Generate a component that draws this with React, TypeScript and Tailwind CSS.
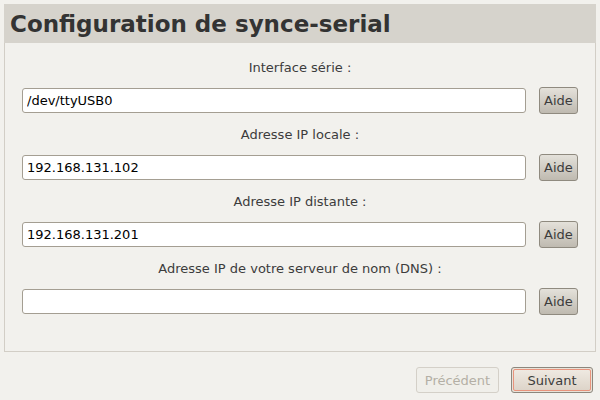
const fields = [
  { label: 'Interface série :', value: '/dev/ttyUSB0' },
  { label: 'Adresse IP locale :', value: '192.168.131.102' },
  { label: 'Adresse IP distante :', value: '192.168.131.201' },
  { label: 'Adresse IP de votre serveur de nom (DNS) :', value: '' },
];

export default function App() {
  return (
    <div
      className="w-[600px] h-[400px] bg-[#f2f1ed] px-[4px] pt-[4px] text-[#3c3c3c] overflow-hidden"
      style={{ fontFamily: '"DejaVu Sans", sans-serif' }}
    >
      {/* Title */}
      <div className="h-[39px] bg-[#d6d3cc] pl-[6px] flex items-center">
        <h1 className="text-[23px] font-bold leading-none text-[#333333] mt-[1px]">
          Configuration de synce-serial
        </h1>
      </div>

      {/* Form panel */}
      <div className="h-[309px] border border-t-0 border-[#d2cec6] px-[17px] pt-[17px] flex flex-col gap-[14px]">
        {fields.map((f) => (
          <div key={f.label} className="flex flex-col gap-[13px]">
            <div className="text-[13px] leading-[15px] text-center">{f.label}</div>
            <div className="h-[25px] flex items-center gap-[13px]">
              <input
                readOnly
                value={f.value}
                className="flex-1 h-[25px] bg-white border border-[#a49e92] rounded-[3px] px-[4px] text-[13px] text-black outline-none"
                style={{ fontFamily: '"DejaVu Sans", sans-serif' }}
              />
              <button className="shrink-0 w-[39px] h-[27px] rounded-[3px] border border-[#8f8a7f] bg-gradient-to-b from-[#e4e1da] to-[#bfbab0] text-[13px] text-[#3c3c3c] leading-none">
                Aide
              </button>
            </div>
          </div>
        ))}
      </div>

      {/* Navigation */}
      <div className="flex justify-end gap-[12px] pt-[15px] pr-[3px]">
        <button className="w-[83px] h-[26px] rounded-[3px] border border-[#d4d0c8] bg-[#f0efea] text-[13px] text-[#b4afa5] leading-none">
          Précédent
        </button>
        <button className="w-[82px] h-[26px] rounded-[3px] border border-[#8c877d] p-[1px] bg-[#e9e2d8]">
          <div className="w-full h-full rounded-[2px] border border-[#e9937c] bg-gradient-to-b from-[#efe9e1] to-[#ddd4c9] flex items-center justify-center text-[13px] text-[#3c3c3c] leading-none">
            Suivant
          </div>
        </button>
      </div>
    </div>
  );
}
